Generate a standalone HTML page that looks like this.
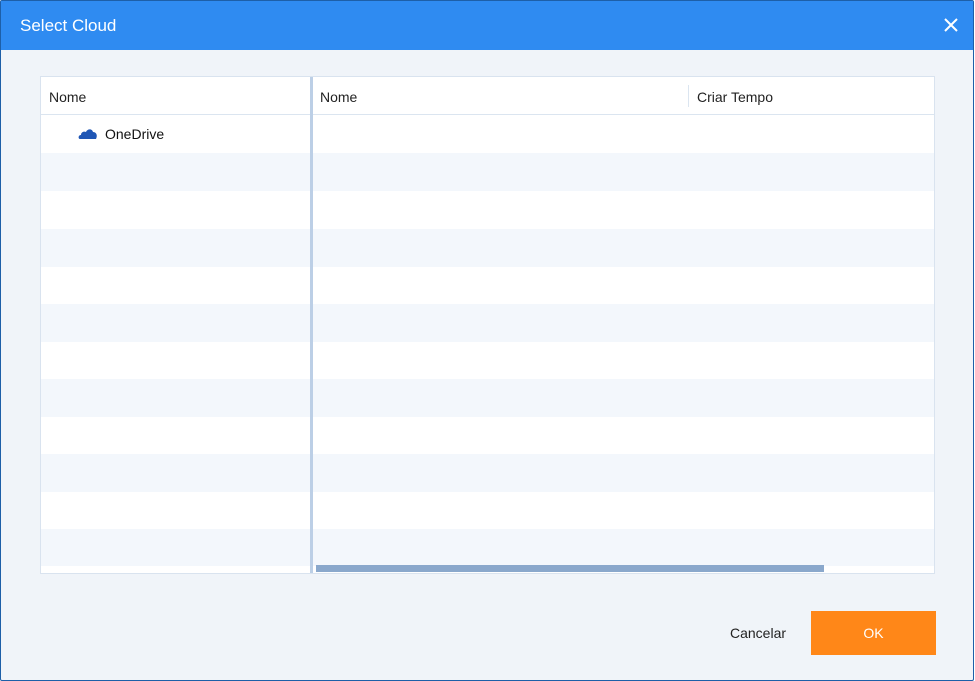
<!DOCTYPE html>
<html><head><style>
*{margin:0;padding:0;box-sizing:border-box}
body{width:975px;height:681px;background:#fff;font-family:"Liberation Sans",sans-serif;position:relative;overflow:hidden}
.win{position:absolute;left:0;top:0;width:974px;height:681px;background:#f0f4f9;border:1px solid #1d5fa8;border-radius:2px}
.title{position:absolute;left:0;top:0;width:100%;height:49px;background:#2f8bf1;color:#fff;font-size:17px;line-height:49px;padding-left:19px}
.x{position:absolute;right:14px;top:16px}
.tbl{position:absolute;left:39px;top:75px;width:895px;height:498px;background:#fff;border:1px solid #d9e3ef;overflow:hidden}
.hdr{position:absolute;top:0;height:38px;left:0;width:100%;border-bottom:1px solid #dbe5f0;font-size:14px;color:#222}
.row{position:absolute;left:0;width:100%;height:37.5px}
.alt{background:#f3f7fc}
.div{position:absolute;left:269px;top:0;width:3px;height:100%;background:#bccfe6}
.sb{position:absolute;left:275px;top:488px;width:508px;height:7px;background:#8aa8cc}
.btm{position:absolute;left:0;top:489px;width:100%;height:9px;background:#fff}
</style></head><body>
<div class="win">
<div class="title">Select Cloud
<svg class="x" width="16" height="16" viewBox="0 0 16 16"><path d="M2 2L14 14M14 2L2 14" stroke="#fff" stroke-width="2"/></svg></div>
<div class="tbl">
<div class="row" style="top:38px"></div>
<div class="row alt" style="top:76px"></div>
<div class="row" style="top:114px"></div>
<div class="row alt" style="top:152px"></div>
<div class="row" style="top:189px"></div>
<div class="row alt" style="top:227px"></div>
<div class="row" style="top:264px"></div>
<div class="row alt" style="top:302px"></div>
<div class="row" style="top:339px"></div>
<div class="row alt" style="top:377px"></div>
<div class="row" style="top:414px"></div>
<div class="row alt" style="top:452px"></div>
<div class="btm"></div>
<div class="hdr"><span style="position:absolute;left:8px;top:12px">Nome</span><span style="position:absolute;left:279px;top:12px">Nome</span><div style="position:absolute;left:647px;top:8px;width:1px;height:22px;background:#dbe5f0"></div><span style="position:absolute;left:656px;top:12px">Criar Tempo</span></div>
<svg style="position:absolute;left:37px;top:50px" width="20" height="12" viewBox="0 0 20 12"><path d="M2 12C0 12 0 8 3 8C3 5 6 4 8 5C9 2 14 1 15 5C18 5 20 8 18 12Z" fill="#1f56b5"/></svg>
<span style="position:absolute;left:64px;top:49px;font-size:14px;color:#111">OneDrive</span>
<div class="div"></div>
<div class="sb"></div>
</div>
<span style="position:absolute;left:729px;top:624px;font-size:14px;color:#222">Cancelar</span>
<div style="position:absolute;left:810px;top:610px;width:125px;height:44px;background:#ff8718;color:#fff;font-size:14px;text-align:center;line-height:44px">OK</div>
</div>
</body></html>
